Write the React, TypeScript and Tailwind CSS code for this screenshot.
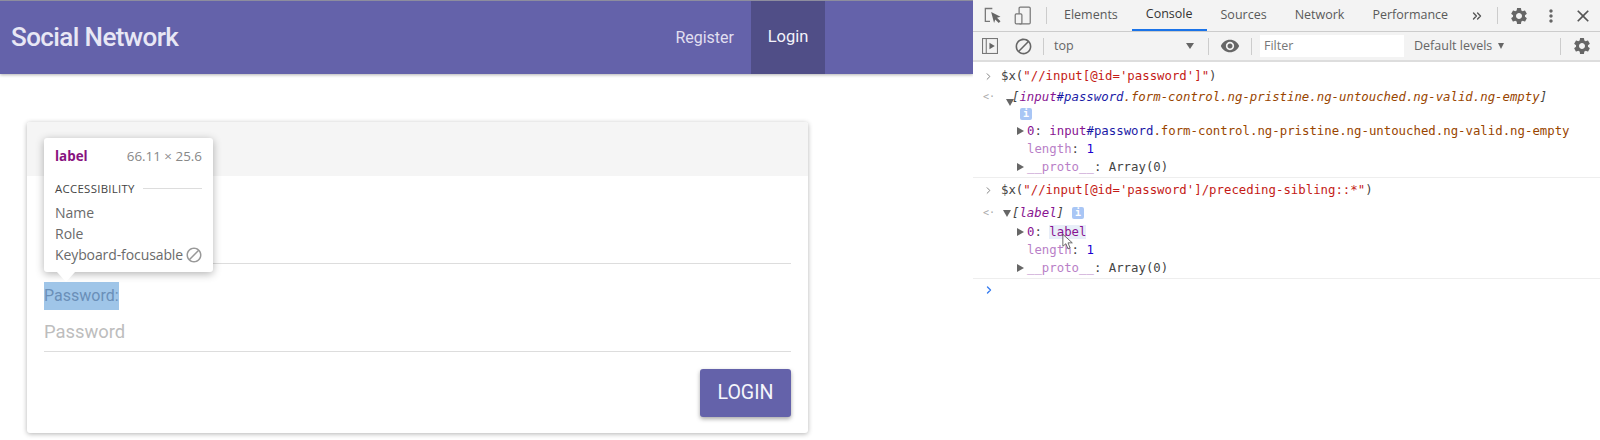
import { ChevronsRight, ChevronRight } from 'lucide-react';
import { MdBlock, MdClose, MdMoreVert, MdSettings, MdVisibility } from 'react-icons/md';

const sans = 'font-["Open_Sans",sans-serif]';

function Tri() {
  return <span className="mr-[3px] inline-block h-0 w-0 border-y-[4.5px] border-l-[7px] border-y-transparent border-l-[#666]" />;
}

function TriDown() {
  return <span className="mr-[1px] inline-block h-0 w-0 border-x-[4.5px] border-t-[7px] border-x-transparent border-t-[#666]" />;
}

function InfoBadge() {
  return <span className="inline-flex h-[12px] w-[12px] items-center justify-center rounded-[2px] bg-[#a9c6f5] text-[10px] font-bold text-white">i</span>;
}

function Tab({ label, active }: { label: string; active?: boolean }) {
  return (
    <div className={`flex h-full items-center px-[14px] text-[12.5px] ${active ? 'border-b-2 border-[#1a73e8] text-[#333]' : 'text-[#5a5a5a]'}`}>{label}</div>
  );
}

function Sep() {
  return <div className="h-[17px] w-px bg-[#ccc]" />;
}

function Row({ className, children }: { className: string; children: React.ReactNode }) {
  return <div className={`flex h-[18px] items-center ${className}`}>{children}</div>;
}

function DevTools() {
  return (
    <div className="flex w-[627px] flex-col bg-white">
      <div className={`flex h-[32px] items-center border-b border-[#ccc] bg-[#f3f3f3] pl-[10px] ${sans}`}>
        <svg width="21" height="21" viewBox="0 0 18 18" fill="none">
          <path d="M8 3H2v11h4" stroke="#777" strokeWidth="1.1" />
          <path d="M7 6l8 4-3 1 3 3-1.5 1.5-3-3-1 3z" fill="#666" />
        </svg>
        <svg width="20" height="20" viewBox="0 0 18 18" className="ml-[9px]" fill="none" stroke="#777" strokeWidth="1.1">
          <rect x="5.5" y="1" width="10" height="15" rx="1" />
          <rect x="2" y="7" width="6" height="9" rx="1" fill="#f3f3f3" />
        </svg>
        <div className="ml-[13px] mr-[3px]"><Sep /></div>
        <Tab label="Elements" />
        <Tab label="Console" active />
        <Tab label="Sources" />
        <Tab label="Network" />
        <Tab label="Performance" />
        <ChevronsRight size={14} strokeWidth={2.4} className="ml-[8px] text-[#555]" />
        <div className="ml-[13px]"><Sep /></div>
        <MdSettings size={20} className="ml-[11px] text-[#666]" />
        <MdMoreVert size={20} className="ml-[12px] text-[#666]" />
        <MdClose size={20} className="ml-[12px] text-[#555]" />
      </div>
      <div className={`flex h-[30px] items-center border-b-2 border-[#ddd] bg-[#f3f3f3] pl-[9px] ${sans}`}>
        <svg width="16" height="16" viewBox="0 0 15 15" fill="none">
          <rect x="0.5" y="0.5" width="14" height="14" stroke="#777" />
          <path d="M4 1v13" stroke="#777" />
          <path d="M7 4.5l5 3-5 3z" fill="#666" />
        </svg>
        <MdBlock size={19} className="ml-[16px] text-[#666]" />
        <div className="ml-[10px]"><Sep /></div>
        <div className="ml-[10px] flex w-[144px] items-center justify-between text-[12.5px] text-[#666]">
          <span>top</span>
          <span className="mr-[4px] h-0 w-0 border-x-[4px] border-t-[6px] border-x-transparent border-t-[#666]" />
        </div>
        <div className="ml-[10px]"><Sep /></div>
        <MdVisibility size={20} className="ml-[11px] text-[#666]" />
        <div className="ml-[11px]"><Sep /></div>
        <div className="ml-[8px] flex h-[22px] w-[144px] items-center bg-white pl-[4px] text-[12.5px] text-[#777]">Filter</div>
        <div className="ml-[10px] flex w-[146px] items-center text-[12.5px] text-[#666]">
          Default levels
          <span className="ml-[6px] h-0 w-0 border-x-[3.5px] border-t-[6px] border-x-transparent border-t-[#666]" />
        </div>
        <Sep />
        <MdSettings size={20} className="ml-[11px] text-[#666]" />
      </div>
      <div className="relative font-['DejaVu_Sans_Mono',monospace] text-[12.35px] leading-[18px] text-[#444]">
        <div className="border-b border-[#eee] pb-[1px] pt-[5px]">
          <Row className="pl-[10px]">
            <ChevronRight size={11} strokeWidth={2} className="mr-[7px] text-[#777]" />
            <span>$x(<span className="text-[#c41a16]">"//input[@id='password']"</span>)</span>
          </Row>
          <Row className="mt-[3px] pl-[10px] italic">
            <span className="w-[23px] text-[10px] not-italic text-[#aaa]">&lt;·</span>
            <span className="-mr-[3px] mt-[10px] flex"><TriDown /></span>
            <span>[<span className="text-[#881391]">input</span><span className="text-[#1a1aa6]">#password</span><span className="text-[#994500]">.form-control.ng-pristine.ng-untouched.ng-valid.ng-empty</span>]</span>
          </Row>
          <div className="flex h-[15px] items-center pl-[47px]"><InfoBadge /></div>
          <Row className="mt-[1px] pl-[44px]">
            <Tri />
            <span><span className="text-[#881391]">0</span>: <span className="text-[#881391]">input</span><span className="text-[#1a1aa6]">#password</span><span className="text-[#994500]">.form-control.ng-pristine.ng-untouched.ng-valid.ng-empty</span></span>
          </Row>
          <Row className="pl-[54px]"><span><span className="text-[#b97fc7]">length</span>: <span className="text-[#1c00cf]">1</span></span></Row>
          <Row className="pl-[44px]">
            <Tri />
            <span><span className="text-[#b97fc7]">__proto__</span>: Array(0)</span>
          </Row>
        </div>
        <div className="border-b border-[#eee] pb-[1px] pt-[3px]">
          <Row className="pl-[10px]">
            <ChevronRight size={11} strokeWidth={2} className="mr-[7px] text-[#777]" />
            <span>$x(<span className="text-[#c41a16]">"//input[@id='password']/preceding-sibling::*"</span>)</span>
          </Row>
          <Row className="mt-[5px] pl-[10px] italic">
            <span className="w-[20px] text-[10px] not-italic text-[#aaa]">&lt;·</span>
            <TriDown />
            <span>[<span className="text-[#881391]">label</span>]</span>
            <span className="ml-[8px] flex not-italic"><InfoBadge /></span>
          </Row>
          <Row className="mt-[1px] pl-[44px]">
            <Tri />
            <span><span className="text-[#881391]">0</span>: <span className="bg-[#e8eef8] text-[#881391]">label</span></span>
          </Row>
          <Row className="pl-[54px]"><span><span className="text-[#b97fc7]">length</span>: <span className="text-[#1c00cf]">1</span></span></Row>
          <Row className="pl-[44px]">
            <Tri />
            <span><span className="text-[#b97fc7]">__proto__</span>: Array(0)</span>
          </Row>
        </div>
        <div className="flex h-[22px] items-center pl-[10px]">
          <ChevronRight size={12} strokeWidth={2.8} className="text-[#367cf1]" />
        </div>
        <svg width="12" height="18" viewBox="0 0 14 20" className="absolute left-[89px] top-[171px]">
          <path d="M1 1v14l3.5-3 2.5 6 2.5-1-2.5-6h5z" fill="#ffffffcc" stroke="#555" strokeWidth="1" />
        </svg>
      </div>
    </div>
  );
}

function Tooltip() {
  return (
    <div className="absolute left-[17px] top-[16px] h-[134px] w-[169px] rounded-[3px] bg-white px-[11px] pt-[8px] text-[#6a6a6a] shadow-[0_2px_9px_rgba(0,0,0,0.3)]">
      <div className={`flex items-center justify-between text-[13.4px] ${sans}`}>
        <span className="font-bold text-[#881280]">label</span>
        <span className="text-[#888]">66.11 × 25.6</span>
      </div>
      <div className={`mt-[14px] flex items-center text-[11.4px] tracking-[0.3px] text-[#444] ${sans}`}>
        ACCESSIBILITY
        <span className="ml-[8px] h-px flex-1 bg-[#ddd]" />
      </div>
      <div className={`mt-[5px] text-[14px] leading-[21px] ${sans}`}>
        <div>Name</div>
        <div>Role</div>
        <div className="flex items-center justify-between tracking-[-0.1px]">
          Keyboard-focusable
          <MdBlock size={18} className="-mr-[1px] text-[#999]" />
        </div>
      </div>
      <span className="absolute left-[13px] top-full h-0 w-0 border-x-[9px] border-t-[10px] border-x-transparent border-t-white" />
    </div>
  );
}

function Card() {
  return (
    <div className="relative flex h-[311px] flex-col rounded-[3px] bg-white shadow-[0_1px_5px_rgba(0,0,0,0.3)]">
      <div className="h-[54px] rounded-t-[3px] bg-[#f5f5f5]" />
      <div className="mx-[17px] h-[88px] border-b border-[#ddd]" />
      <div className="mx-[17px] mt-[18px] flex flex-col items-start">
        <div className="flex h-[28px] w-[75px] items-center bg-[#9fc5e8] text-[16px] text-[#6a8fb8]">Password:</div>
        <div className="flex h-[42px] w-full items-center border-b border-[#ddd] pt-[3px] text-[18.4px] text-[#bdbdbd]">Password</div>
      </div>
      <div className="mx-[17px] mt-[17px] flex justify-end">
        <button className="flex h-[48px] w-[91px] items-center justify-center rounded-[3px] bg-[#6462aa] text-[19.6px] font-normal text-[#f5f5fb] shadow-[0_2px_4px_rgba(0,0,0,0.35)]">LOGIN</button>
      </div>
      <Tooltip />
    </div>
  );
}

export default function App() {
  return (
    <div className="flex h-[440px] w-[1600px] overflow-hidden bg-white font-['Roboto',sans-serif]">
      <div className="w-[973px]">
        <nav className="flex h-[74px] items-stretch border-t border-[#8d8d9e] bg-[#6462aa] shadow-[0_1px_3px_rgba(0,0,0,0.3)]">
          <div className="flex items-center pl-[11px] text-[26px] font-medium tracking-[-0.6px] text-[#e8e7f5]">Social Network</div>
          <div className="ml-auto flex items-center px-[17px] text-[16px] text-[#e0dff0]">Register</div>
          <div className="mr-[148px] flex w-[74px] items-center justify-center bg-[#504e87] text-[16.5px] text-[#f3f3fa]">Login</div>
        </nav>
        <div className="pl-[27px] pr-[165px] pt-[48px]">
          <Card />
        </div>
      </div>
      <DevTools />
    </div>
  );
}
